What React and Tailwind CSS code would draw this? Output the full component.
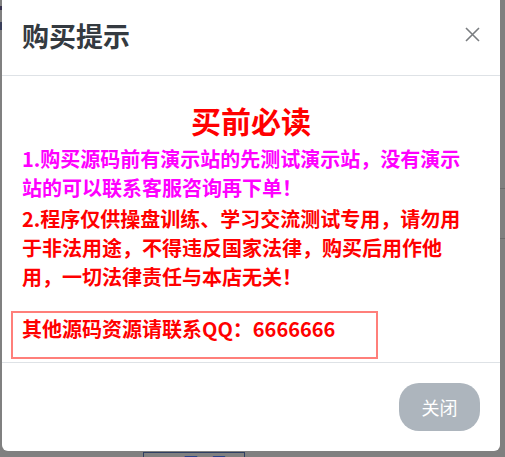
import React from 'react';

const font = { fontFamily: '"Noto Sans CJK SC", "Noto Sans", sans-serif' };

function CloseIcon() {
    return (
        <svg width="15" height="15" viewBox="0 0 15 15" className="mt-[27px]">
            <path d="M1 1 L14 14 M14 1 L1 14" stroke="#7a7d80" strokeWidth="1.6" fill="none" />
        </svg>
    );
}

export default function App() {
    return (
        <div className="relative h-[457px] w-[505px] overflow-hidden bg-[#808080]" style={font}>
            {/* page behind the backdrop */}
            <div className="absolute left-0 top-[6px] h-[4px] w-[2px] bg-[#3a3550]" />
            <div className="absolute left-0 top-[22px] h-[8px] w-[2px] bg-[#3a3f5a]" />
            <div className="absolute left-[500px] top-[188px] h-px w-[5px] bg-[#6c6c6c]" />
            <div className="absolute left-[500px] top-[238px] h-px w-[5px] bg-[#6c6c6c]" />
            <div className="absolute left-[143px] top-[452px] flex h-[30px] w-[102px] items-start gap-4 border border-[#2f3f62] px-4 text-[14px] leading-[16px] text-[#28448a]">
                <span>1</span>
                <span>下一页</span>
            </div>

            {/* modal */}
            <div className="relative ml-[2px] w-[498px] rounded-b-[6px] bg-white">
                <div className="flex h-[76px] justify-between border-b border-[#dee2e6] pl-[20px] pr-[20px]">
                    <h4 className="mt-[18px] text-[27px] font-bold leading-[36px] text-[#343a40]">购买提示</h4>
                    <CloseIcon />
                </div>

                <div className="px-[9px] pt-[24px] pb-[3px] font-bold">
                    <h2 className="text-center text-[30px] leading-[40px] text-[#ff0000]">买前必读</h2>
                    <p className="mt-[4px] pl-[11px] pr-[23px] text-[20px] leading-[29px] text-[#ff00ff]">
                        1.购买源码前有演示站的先测试演示站，没有演示站的可以联系客服咨询再下单！
                    </p>
                    <p className="mt-[2px] pl-[11px] pr-[23px] text-[20px] leading-[29px] text-[#ff0000]">
                        2.程序仅供操盘训练、学习交流测试专用，请勿用于非法用途，不得违反国家法律，购买后用作他用，一切法律责任与本店无关！
                    </p>
                    <div className="mt-[20px] w-[367px] border-2 border-[#ff7f7a] pl-[9px] pt-[1px] pb-[14px] text-[20px] leading-[29px] text-[#ff0000]">
                        其他源码资源请联系QQ：6666666
                    </div>
                </div>

                <div className="flex justify-end border-t border-[#dee2e6] px-[20px] pt-[20px] pb-[20px]">
                    <button className="h-[48px] w-[81px] rounded-[20px] bg-[#adb5bd] text-[18px] text-white">
                        关闭
                    </button>
                </div>
            </div>
        </div>
    );
}
